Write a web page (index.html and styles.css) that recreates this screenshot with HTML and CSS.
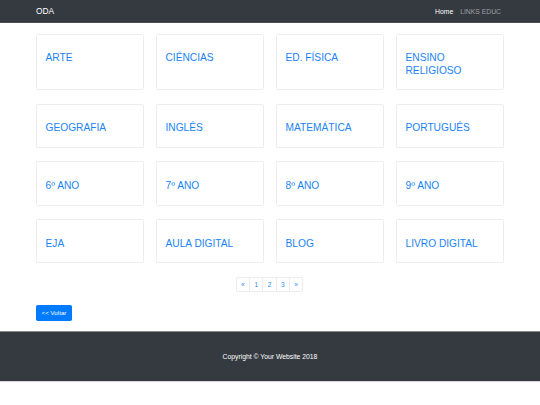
FILE: index.html
```html
<!DOCTYPE html>
<html lang="pt">
<head>
<meta charset="utf-8">
<title>ODA</title>
<link rel="stylesheet" href="styles.css">
</head>
<body>
<nav class="navbar">
  <div class="container nav-inner">
    <a class="brand" href="#">ODA</a>
    <ul class="nav-links">
      <li><a class="active" href="#">Home</a></li>
      <li><a href="#">LINKS EDUC</a></li>
    </ul>
  </div>
</nav>
<main class="container">
  <div class="grid">
    <a class="card" href="#">ARTE</a>
    <a class="card" href="#">CIÊNCIAS</a>
    <a class="card" href="#">ED. FÍSICA</a>
    <a class="card" href="#">ENSINO<br>RELIGIOSO</a>
    <a class="card" href="#">GEOGRAFIA</a>
    <a class="card" href="#">INGLÊS</a>
    <a class="card" href="#">MATEMÁTICA</a>
    <a class="card" href="#">PORTUGUÊS</a>
    <a class="card" href="#">6º ANO</a>
    <a class="card" href="#">7º ANO</a>
    <a class="card" href="#">8º ANO</a>
    <a class="card" href="#">9º ANO</a>
    <a class="card" href="#">EJA</a>
    <a class="card" href="#">AULA DIGITAL</a>
    <a class="card" href="#">BLOG</a>
    <a class="card" href="#">LIVRO DIGITAL</a>
  </div>
  <ul class="pagination">
    <li><a href="#">«</a></li>
    <li><a href="#">1</a></li>
    <li><a href="#">2</a></li>
    <li><a href="#">3</a></li>
    <li><a href="#">»</a></li>
  </ul>
  <a class="btn" href="#">&lt;&lt; Voltar</a>
</main>
<footer class="footer">
  <p>Copyright © Your Website 2018</p>
</footer>
</body>
</html>
```
FILE: styles.css
```css
* { box-sizing: border-box; }
html, body { margin: 0; padding: 0; background: #fff; }
body { font-family: "Liberation Sans", Arial, Helvetica, sans-serif; color: #212529; }
a { text-decoration: none; }
.container { width: 468px; margin: 0 auto; }

.navbar { background: #343a40; height: 23px; border-bottom: 1px solid #4a4f55; }
.nav-inner { display: flex; align-items: center; justify-content: space-between; height: 22px; }
.brand, .brand:visited { color: #fff; font-size: 8.4px; }
.nav-links { list-style: none; margin: 0; padding: 0; display: flex; gap: 7px; font-size: 6.8px; margin-right: 3px; }
.nav-links a, .nav-links a:visited { color: rgba(255,255,255,.5); }
.nav-links a.active, .nav-links a.active:visited { color: #fff; }

.grid { display: grid; grid-template-columns: repeat(4, 1fr); column-gap: 12px; row-gap: 13.4px; margin-top: 10.5px; }
.card, .card:visited { display: block; border: 1px solid #ededed; border-radius: 1.6px; padding: 17.5px 8.5px 12.2px; color: #1a84f5; font-size: 10.2px; line-height: 12.6px; }

.pagination { list-style: none; margin: 13.2px 0 0; padding: 0; display: flex; justify-content: center; }
.pagination li a, .pagination li a:visited { display: block; width: 14.3px; height: 15.3px; line-height: 13.3px; text-align: center; border: 1px solid #eaecee; margin-left: -1px; color: #2a88f0; font-size: 6.5px; }
.pagination li:first-child a { border-radius: 1.6px 0 0 1.6px; }
.pagination li:last-child a { border-radius: 0 1.6px 1.6px 0; }

.btn, .btn:visited { display: inline-block; margin-top: 13.3px; background: #007bff; color: #fff; font-size: 6.2px; width: 36px; height: 16px; line-height: 16px; text-align: center; border-radius: 1.7px; }

.footer { background: #343a40; margin-top: 9.6px; height: 51px; display: flex; align-items: center; justify-content: center; border-top: 1px solid #8a8e92; border-bottom: 1px solid #d6d6d6; }
.footer p { margin: 0; color: #fff; font-size: 6.8px; }
```
